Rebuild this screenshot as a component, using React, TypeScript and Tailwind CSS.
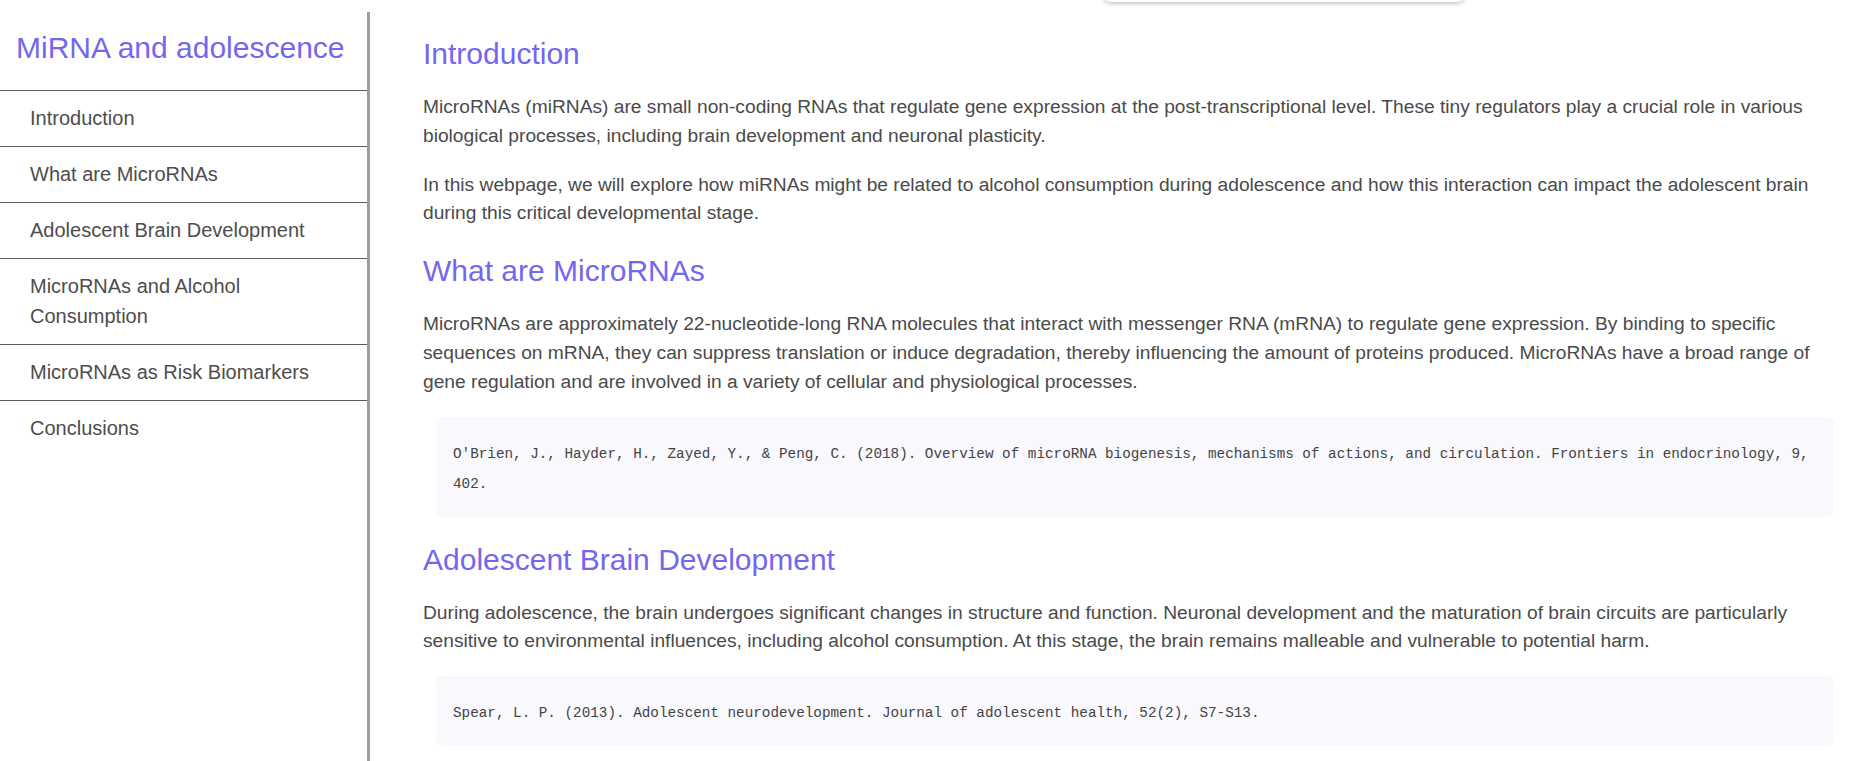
import React from 'react';

const navItems = [
  'Introduction',
  'What are MicroRNAs',
  'Adolescent Brain Development',
  'MicroRNAs and Alcohol Consumption',
  'MicroRNAs as Risk Biomarkers',
  'Conclusions',
];

function Heading({ children, first = false }: { children: React.ReactNode; first?: boolean }) {
  return (
    <h2
      className={`${first ? '' : 'mt-[25px]'} mb-[22px] text-[30px] leading-[35px] font-normal text-[#7467ee]`}
    >
      {children}
    </h2>
  );
}

function Para({ children }: { children: React.ReactNode }) {
  return <p className="mb-5 text-[19.2px] leading-[28.8px] text-[#4a4a4a]">{children}</p>;
}

function Reference({ children }: { children: React.ReactNode }) {
  return (
    <pre className="ml-[13px] mb-6 rounded-md bg-[#f8f8fd] px-[17px] pt-[22px] pb-[18px] font-['Liberation_Mono','DejaVu_Sans_Mono',monospace] text-[14.3px] leading-[30px] text-[#444444] whitespace-pre-wrap">
      {children}
    </pre>
  );
}

export default function App() {
  return (
    <div className="relative flex h-[761px] overflow-hidden bg-white font-['Liberation_Sans',Arial,sans-serif]">
      {/* popup peeking in from above */}
      <div className="absolute left-[1103px] top-[-40px] h-[42px] w-[362px] rounded-b-lg bg-white shadow-[0_1px_5px_rgba(0,0,0,0.3)]" />

      <aside className="mt-3 w-[370px] shrink-0 border-r-[3px] border-[#9b9fa2]">
        <div className="pl-4 pt-[18px] pb-[25px] text-[30px] leading-[35px] text-[#7467ee]">MiRNA and adolescence</div>
        <nav>
          {navItems.map((item) => (
            <div
              key={item}
              className="border-t border-[#5a5a5a] pl-[30px] pr-[30px] pt-3 pb-[13px] text-[20px] leading-[30px] text-[#4d4d4d]"
            >
              {item}
            </div>
          ))}
        </nav>
      </aside>

      <main className="min-w-0 flex-1 pl-[53px] pr-[36px] pt-[36px]">
        <Heading first>Introduction</Heading>
        <Para>
          MicroRNAs (miRNAs) are small non-coding RNAs that regulate gene expression at the post-transcriptional
          level. These tiny regulators play a crucial role in various biological processes, including brain
          development and neuronal plasticity.
        </Para>
        <Para>
          In this webpage, we will explore how miRNAs might be related to alcohol consumption during adolescence and
          how this interaction can impact the adolescent brain during this critical developmental stage.
        </Para>

        <Heading>What are MicroRNAs</Heading>
        <Para>
          MicroRNAs are approximately 22-nucleotide-long RNA molecules that interact with messenger RNA (mRNA) to
          regulate gene expression. By binding to specific sequences on mRNA, they can suppress translation or induce
          degradation, thereby influencing the amount of proteins produced. MicroRNAs have a broad range of gene
          regulation and are involved in a variety of cellular and physiological processes.
        </Para>
        <Reference>
          O'Brien, J., Hayder, H., Zayed, Y., &amp; Peng, C. (2018). Overview of microRNA biogenesis, mechanisms of
          actions, and circulation. Frontiers in endocrinology, 9, 402.
        </Reference>

        <Heading>Adolescent Brain Development</Heading>
        <Para>
          During adolescence, the brain undergoes significant changes in structure and function. Neuronal development
          and the maturation of brain circuits are particularly sensitive to environmental influences, including
          alcohol consumption. At this stage, the brain remains malleable and vulnerable to potential harm.
        </Para>
        <Reference>Spear, L. P. (2013). Adolescent neurodevelopment. Journal of adolescent health, 52(2), S7-S13.</Reference>
      </main>
    </div>
  );
}
